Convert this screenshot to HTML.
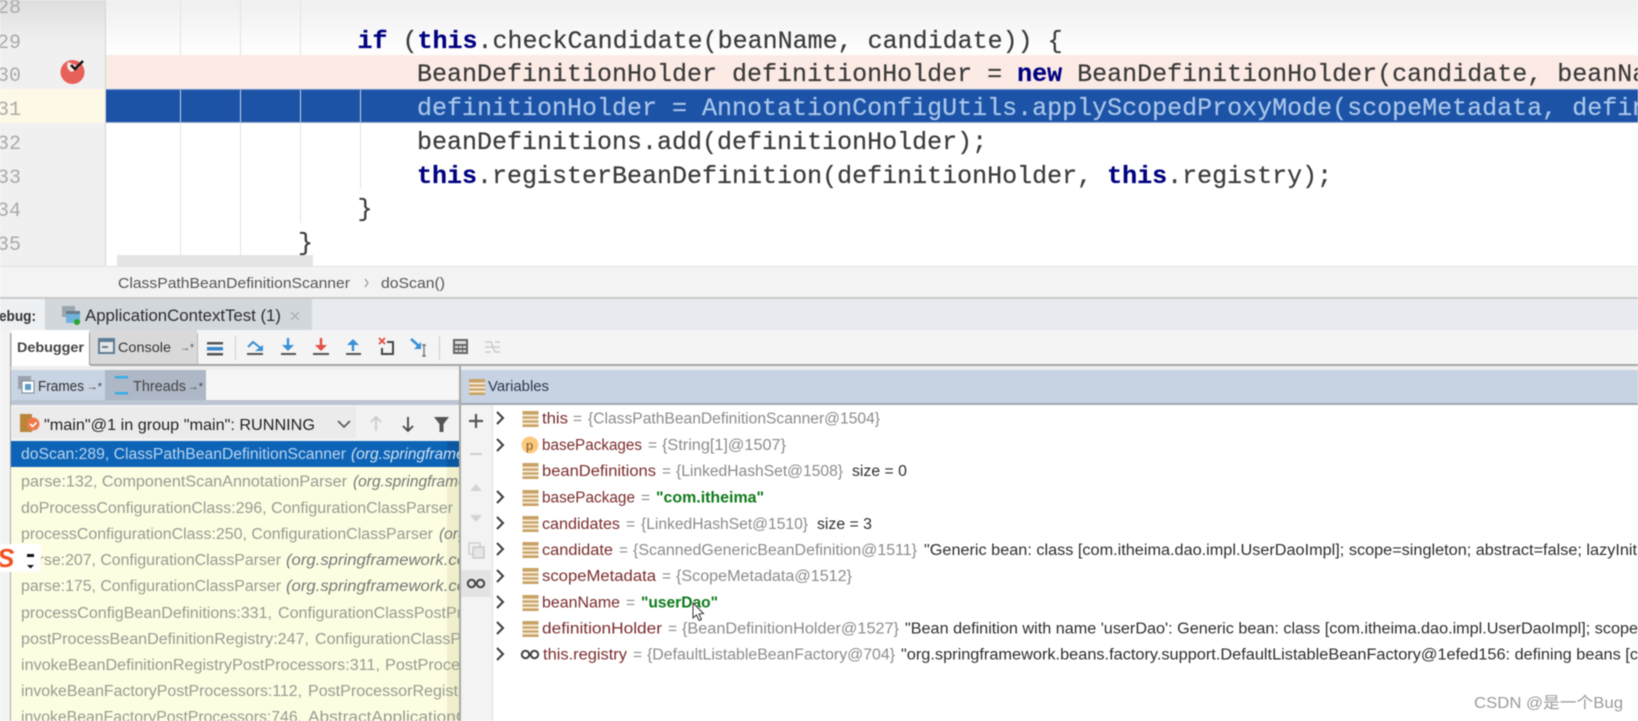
<!DOCTYPE html>
<html><head><meta charset="utf-8"><style>
html,body{margin:0;padding:0;background:#fff;width:1638px;height:721px;overflow:hidden}
svg{display:block;filter:blur(.45px)}
.c{font:25px "Liberation Mono",monospace;fill:#3a3a3a;stroke:#3a3a3a;stroke-width:.2px}
.k{font-weight:bold;fill:#000080;stroke:#000080;stroke-width:.2px}
.n{font:20px "Liberation Mono",monospace;fill:#aaa}
.u{font:15px "Liberation Sans",sans-serif;fill:#333}
.f{font:15.5px "Liberation Sans",sans-serif;fill:#9a9a92}
.i{font-style:italic;fill:#777}
.v{font:15.5px "Liberation Sans",sans-serif;fill:#7b2c2c}
.g{font:15.5px "Liberation Sans",sans-serif;fill:#8b8b8b}
.d{font:15.5px "Liberation Sans",sans-serif;fill:#2e2e2e}
.s{font:bold 15.5px "Liberation Sans",sans-serif;fill:#0f7a1a}
</style></head><body>
<svg width="1638" height="721" viewBox="0 0 1638 721" xmlns="http://www.w3.org/2000/svg">
<defs>
<linearGradient id="t" x1="0" y1="0" x2="0" y2="1"><stop offset="0" stop-color="#efefef"/><stop offset="1" stop-color="#fff"/></linearGradient>
<linearGradient id="tg" x1="0" y1="0" x2="0" y2="1"><stop offset="0" stop-color="#dedede"/><stop offset="1" stop-color="#f1f1f1"/></linearGradient>
<clipPath id="fc"><rect x="11" y="441" width="448" height="280"/></clipPath>
<clipPath id="vc"><rect x="492" y="405" width="1146" height="316"/></clipPath>
<g id="b"><rect x="0" y="0" width="16" height="16" fill="#c9a266"/><rect x="0" y="3.5" width="16" height="2" fill="#f3e6d0"/><rect x="0" y="7.5" width="16" height="2" fill="#f3e6d0"/><rect x="0" y="11.5" width="16" height="2" fill="#f3e6d0"/></g>
<path id="ch" d="M0 0l6 6-6 6" fill="none" stroke="#3c3c3c" stroke-width="2"/>
<g id="oo" fill="none" stroke="#444" stroke-width="2"><circle cx="4.5" cy="4.5" r="3.7"/><circle cx="13.5" cy="4.5" r="3.7"/></g>
</defs>

<!-- editor -->
<rect x="0" y="0" width="105" height="267" fill="#f0f0f0"/>
<rect x="0" y="0" width="105" height="45" fill="url(#tg)"/>
<rect x="105" y="0" width="1533" height="55" fill="url(#t)"/>
<rect x="105" y="55" width="1533" height="34" fill="#fcebe5"/>
<rect x="0" y="89" width="105" height="34" fill="#fef9e6"/>
<rect x="105" y="89" width="1533" height="33" fill="#1c53a7"/>
<rect x="105" y="89" width="1533" height="1" fill="#6e94cc"/>
<rect x="105" y="122" width="1533" height="1" fill="#9fb0cc"/>
<rect x="105" y="0" width="1" height="267" fill="#d4d4d4"/>
<g fill="#e3e3e3"><rect x="180" y="0" width="1" height="55"/><rect x="240" y="0" width="1" height="55"/><rect x="300" y="0" width="1" height="55"/>
<rect x="180" y="123" width="1" height="144"/><rect x="240" y="123" width="1" height="134"/><rect x="300" y="123" width="1" height="100"/><rect x="360" y="123" width="1" height="66"/></g>
<g fill="#c7d3e6"><rect x="180" y="90" width="1" height="32"/><rect x="240" y="90" width="1" height="32"/><rect x="300" y="90" width="1" height="32"/><rect x="360" y="90" width="1" height="32"/></g>
<rect x="117" y="255" width="196" height="12" fill="#e5e5e5"/>
<text class="n" x="-3" y="13">28</text><text class="n" x="-3" y="48">29</text><text class="n" x="-3" y="81">30</text><text class="n" x="-3" y="115">31</text><text class="n" x="-3" y="149">32</text><text class="n" x="-3" y="183">33</text><text class="n" x="-3" y="216">34</text><text class="n" x="-3" y="250">35</text>
<circle cx="72.5" cy="72" r="12" fill="#e8605a"/>
<path d="M68 62a7 7 0 0 0 4 10l8-5" fill="#fff" opacity=".85"/>
<path d="M71 65l4 4 8-8" fill="none" stroke="#161616" stroke-width="2.6"/>

<text class="c" x="357.5" y="48"><tspan class="k">if</tspan> (<tspan class="k">this</tspan>.checkCandidate(beanName, candidate)) {</text>
<text class="c" x="417" y="81">BeanDefinitionHolder definitionHolder = <tspan class="k">new</tspan> BeanDefinitionHolder(candidate, beanNa</text>
<text class="c" x="417" y="115" style="fill:#a9c6ea;stroke:#a9c6ea">definitionHolder = AnnotationConfigUtils.applyScopedProxyMode(scopeMetadata, defin</text>
<text class="c" x="417" y="149">beanDefinitions.add(definitionHolder);</text>
<text class="c" x="417" y="183"><tspan class="k">this</tspan>.registerBeanDefinition(definitionHolder, <tspan class="k">this</tspan>.registry);</text>
<text class="c" x="357.5" y="216">}</text>
<text class="c" x="298" y="250">}</text>

<!-- breadcrumb -->
<rect x="0" y="267" width="1638" height="30" fill="#f3f3f3"/>
<rect x="0" y="266" width="1638" height="1" fill="#e2e2e2"/>
<text class="u" x="118" y="288" textLength="232" lengthAdjust="spacingAndGlyphs" style="fill:#555">ClassPathBeanDefinitionScanner</text>
<path d="M365 279l3 4-3 4" fill="none" stroke="#999" stroke-width="1.2"/>
<text class="u" x="381" y="288" textLength="64" lengthAdjust="spacingAndGlyphs" style="fill:#555">doScan()</text>

<!-- debug tab bar -->
<rect x="0" y="297" width="1638" height="33" fill="#e7ebf0"/>
<rect x="0" y="297" width="1638" height="2" fill="#c9c9c9"/>
<rect x="0" y="299" width="45" height="31" fill="#eef1f4"/>
<rect x="45" y="299" width="267" height="31" fill="#d2d7dc"/>
<text x="-1" y="321" textLength="37" lengthAdjust="spacingAndGlyphs" style="font:bold 15px 'Liberation Sans',sans-serif;fill:#333">ebug:</text>
<rect x="62" y="306" width="13" height="11" fill="#9aa6ae"/><rect x="66" y="311" width="14" height="12" fill="#6fb2dd"/><rect x="66" y="311" width="14" height="3" fill="#6a7b88"/><circle cx="77" cy="322" r="3" fill="#2aa52a"/>
<text class="u" x="85" y="321" textLength="196" lengthAdjust="spacingAndGlyphs" style="font-size:16.5px;fill:#2c2c2c">ApplicationContextTest (1)</text>
<path d="M291 312l8 8m0-8l-8 8" stroke="#b0b0b0" stroke-width="1.4"/>

<!-- toolbar -->
<rect x="0" y="330" width="1638" height="35" fill="#f4f4f4"/>
<rect x="0" y="330" width="10" height="391" fill="#f3f3f3"/>
<rect x="11" y="330" width="78" height="35" fill="#fff"/>
<rect x="89" y="330" width="108" height="35" fill="#d9d9d9"/>
<rect x="10" y="333" width="1.5" height="388" fill="#a8a8a8"/>
<rect x="89" y="333" width="1" height="32" fill="#999"/><rect x="197" y="333" width="1" height="32" fill="#bbb"/>
<rect x="90" y="364" width="1548" height="2" fill="#a6a6a6"/>
<text x="17" y="352" textLength="67" lengthAdjust="spacingAndGlyphs" style="font:bold 14px 'Liberation Sans',sans-serif;fill:#444">Debugger</text>
<rect x="98" y="338" width="17" height="16" fill="#5e7d96"/><rect x="100" y="342" width="13" height="10" fill="#e6e6e6"/><rect x="102" y="346" width="6" height="2" fill="#5e7d96"/>
<text class="u" x="118" y="352" textLength="53" lengthAdjust="spacingAndGlyphs" style="font-size:14px">Console</text>
<text class="u" x="180" y="351" textLength="14" lengthAdjust="spacingAndGlyphs" style="font-size:11px;fill:#555">→*</text>
<g fill="#555"><rect x="207" y="342" width="16" height="2.5"/><rect x="207" y="353" width="16" height="2.5"/></g><rect x="207" y="347" width="16" height="3.5" fill="#3a86c8"/>
<rect x="235" y="336" width="1" height="24" fill="#ccc"/><rect x="439" y="336" width="1" height="24" fill="#ccc"/>
<path d="M248 347l5-5 5 4 4 3" fill="none" stroke="#3a8fd6" stroke-width="2"/><path d="M255 351h8v-6z" fill="#3a8fd6"/>
<rect x="247" y="353" width="16" height="2" fill="#555"/>
<path d="M288 338v10" stroke="#3a8fd6" stroke-width="2.4"/><path d="M282 345h12l-6 6z" fill="#3a8fd6"/><rect x="281" y="353" width="15" height="2" fill="#555"/>
<path d="M321 338v10" stroke="#e54c42" stroke-width="2.4"/><path d="M315 345h12l-6 6z" fill="#e54c42"/><rect x="313" y="353" width="16" height="2" fill="#555"/>
<path d="M353 351v-8" stroke="#3a8fd6" stroke-width="2.4"/><path d="M347 345h12l-6-6z" fill="#3a8fd6"/><rect x="346" y="353" width="15" height="2" fill="#555"/>
<path d="M379 338l6 6m0-6l-6 6" stroke="#e54c42" stroke-width="1.8"/><path d="M387 342h6v12h-11v-6" fill="none" stroke="#444" stroke-width="2"/>
<path d="M411 339l9 8" stroke="#3a8fd6" stroke-width="2.6"/><path d="M421 342v7h-7z" fill="#3a8fd6"/><path d="M422 345h4m-2 0v11m-2 0h4" fill="none" stroke="#777" stroke-width="1.4"/>
<rect x="453" y="339" width="15" height="15" fill="#666"/><rect x="455" y="341" width="11" height="3" fill="#ddd"/><g fill="#ddd"><rect x="455" y="346" width="3" height="2"/><rect x="459" y="346" width="3" height="2"/><rect x="463" y="346" width="3" height="2"/><rect x="455" y="350" width="3" height="2"/><rect x="459" y="350" width="3" height="2"/><rect x="463" y="350" width="3" height="2"/></g>
<path d="M485 342h6l4 10h5M485 352h6M495 342h5M485 347h15" fill="none" stroke="#ccc" stroke-width="1.5"/>

<!-- frames header -->
<rect x="11" y="366" width="1627" height="4" fill="#eeeeee"/>
<rect x="11" y="370" width="448" height="30" fill="#f6f6f6"/>
<rect x="11" y="370" width="94" height="30" fill="#c8d3e3"/>
<rect x="105" y="370" width="101" height="30" fill="#adb7c5"/>
<rect x="11" y="400" width="449" height="5" fill="#bcc5d2"/>
<rect x="459" y="366" width="2" height="355" fill="#a9a9a0"/>
<rect x="461" y="370" width="1177" height="33" fill="#c7d2e3"/>
<rect x="461" y="403" width="1177" height="2" fill="#9fa8b5"/>
<rect x="18" y="376" width="13" height="13" fill="#9aa3ad"/><rect x="22" y="381" width="12" height="12" fill="#fff" stroke="#7b8a96"/><rect x="25" y="384" width="6" height="6" fill="#5b9cc8"/>
<text class="u" x="38" y="391" textLength="46" lengthAdjust="spacingAndGlyphs">Frames</text>
<text class="u" x="87" y="390" textLength="15" lengthAdjust="spacingAndGlyphs" style="font-size:11px;fill:#444">→*</text>
<rect x="115" y="376" width="13" height="2.5" fill="#37aee2"/><rect x="115" y="392" width="13" height="2.5" fill="#37aee2"/>
<text class="u" x="133" y="391" textLength="53" lengthAdjust="spacingAndGlyphs" style="fill:#444">Threads</text>
<text class="u" x="188" y="390" textLength="15" lengthAdjust="spacingAndGlyphs" style="font-size:11px;fill:#444">→*</text>
<use href="#b" x="469" y="379"/>
<text class="u" x="488" y="391" textLength="61" lengthAdjust="spacingAndGlyphs" style="fill:#2c3a4c">Variables</text>

<!-- dropdown -->
<rect x="11" y="405" width="448" height="36" fill="#f2f2f2"/>
<rect x="12" y="407" width="344" height="31" fill="#ebebeb"/>
<rect x="20" y="414" width="12" height="18" fill="#b9863a"/><circle cx="33" cy="424" r="6.5" fill="#ee7a4a"/><path d="M30 424l2.5 2.5 4-4" fill="none" stroke="#fff" stroke-width="1.6"/>
<text class="u" x="44" y="430" textLength="271" lengthAdjust="spacingAndGlyphs" style="font-size:16px;fill:#222">"main"@1 in group "main": RUNNING</text>
<path d="M338 421l6 6 6-6" fill="none" stroke="#555" stroke-width="1.6"/>
<path d="M376 431v-14m-5 5l5-5 5 5" fill="none" stroke="#ccc" stroke-width="1.8"/>
<path d="M408 417v14m-5-5l5 5 5-5" fill="none" stroke="#444" stroke-width="1.8"/>
<path d="M434 417h15l-5.5 7v8h-4v-8z" fill="#555"/>

<!-- frames list -->
<rect x="11" y="441" width="448" height="280" fill="#fdfde2"/>
<rect x="447" y="467" width="12" height="254" fill="#efefcb"/>
<rect x="11" y="441" width="448" height="26" fill="#0d64b6"/>
<rect x="447" y="441" width="12" height="26" fill="#0b57a0"/>
<g clip-path="url(#fc)">
<text class="f" x="21" y="459" textLength="325" lengthAdjust="spacingAndGlyphs" style="fill:#b9d4ee">doScan:289, ClassPathBeanDefinitionScanner</text><text class="f i" x="351" y="459" style="fill:#cfe0f2">(org.springframework</text>
<text class="f" x="21" y="486.500" textLength="326" lengthAdjust="spacingAndGlyphs">parse:132, ComponentScanAnnotationParser</text><text class="f i" x="353" y="486.500">(org.springframework</text>
<text class="f" x="21" y="513" textLength="432" lengthAdjust="spacingAndGlyphs">doProcessConfigurationClass:296, ConfigurationClassParser</text>
<text class="f" x="21" y="539" textLength="412" lengthAdjust="spacingAndGlyphs">processConfigurationClass:250, ConfigurationClassParser</text><text class="f i" x="439" y="539">(org</text>
<text class="f" x="21" y="565" textLength="260" lengthAdjust="spacingAndGlyphs">parse:207, ConfigurationClassParser</text><text class="f i" x="286" y="565" textLength="180" lengthAdjust="spacingAndGlyphs">(org.springframework.co</text>
<text class="f" x="21" y="591" textLength="260" lengthAdjust="spacingAndGlyphs">parse:175, ConfigurationClassParser</text><text class="f i" x="286" y="591" textLength="180" lengthAdjust="spacingAndGlyphs">(org.springframework.co</text>
<text class="f" x="21" y="618" textLength="251" lengthAdjust="spacingAndGlyphs">processConfigBeanDefinitions:331,</text><text class="f" x="278" y="618" textLength="193" lengthAdjust="spacingAndGlyphs">ConfigurationClassPostPro</text>
<text class="f" x="21" y="644" textLength="288" lengthAdjust="spacingAndGlyphs">postProcessBeanDefinitionRegistry:247,</text><text class="f" x="315" y="644" textLength="155" lengthAdjust="spacingAndGlyphs">ConfigurationClassPo</text>
<text class="f" x="21" y="670" textLength="359" lengthAdjust="spacingAndGlyphs">invokeBeanDefinitionRegistryPostProcessors:311,</text><text class="f" x="385" y="670" textLength="75" lengthAdjust="spacingAndGlyphs">PostProce</text>
<text class="f" x="21" y="696" textLength="281" lengthAdjust="spacingAndGlyphs">invokeBeanFactoryPostProcessors:112,</text><text class="f" x="308" y="696" textLength="150" lengthAdjust="spacingAndGlyphs">PostProcessorRegist</text>
<text class="f" x="21" y="722" textLength="281" lengthAdjust="spacingAndGlyphs">invokeBeanFactoryPostProcessors:746,</text><text class="f" x="308" y="722" textLength="170" lengthAdjust="spacingAndGlyphs">AbstractApplicationCo</text>
</g>

<!-- CSDN popup -->
<rect x="0" y="544" width="41" height="28" fill="#fff"/>
<text x="-3" y="567" style="font:italic bold 26px 'Liberation Sans',sans-serif;fill:#f4501e">S</text>
<rect x="27" y="554" width="7" height="3" fill="#111"/><path d="M27 565h7l-3.500 3.500z" fill="#111"/>

<!-- variables gutter -->
<rect x="461" y="405" width="31" height="316" fill="#f3f3f3"/>
<rect x="492" y="405" width="1" height="316" fill="#dedede"/>
<path d="M476 414v14M469 421h14" stroke="#555" stroke-width="2.2"/>
<path d="M470 454h12" stroke="#cfcfcf" stroke-width="2"/>
<path d="M470 491l6-7 6 7z" fill="#d3d3d3"/><path d="M470 515l6 7 6-7z" fill="#d3d3d3"/>
<rect x="469" y="543" width="11" height="11" fill="none" stroke="#d0d0d0" stroke-width="1.500"/><rect x="473" y="547" width="11" height="11" fill="#e6e6e6" stroke="#cacaca" stroke-width="1.500"/>
<rect x="461" y="570" width="30" height="27" fill="#e3e3e3"/>
<use href="#oo" x="467" y="579"/>

<!-- variables rows -->
<use href="#ch" x="497" y="412"/><use href="#ch" x="497" y="439"/><use href="#ch" x="497" y="491"/><use href="#ch" x="497" y="517"/><use href="#ch" x="497" y="543"/><use href="#ch" x="497" y="570"/><use href="#ch" x="497" y="596"/><use href="#ch" x="497" y="622"/><use href="#ch" x="497" y="648"/>
<use href="#b" x="522.500" y="411"/>
<circle cx="530" cy="445" r="8.500" fill="#fcc97e"/><text x="526" y="450" style="font:13px 'Liberation Sans',sans-serif;fill:#7a5a2a">p</text>
<use href="#b" x="522.500" y="463"/><use href="#b" x="522.500" y="490"/><use href="#b" x="522.500" y="516"/><use href="#b" x="522.500" y="542"/><use href="#b" x="522.500" y="568"/><use href="#b" x="522.500" y="595"/><use href="#b" x="522.500" y="621"/>
<use href="#oo" x="521" y="650"/>
<g clip-path="url(#vc)">
<text class="v" x="542" y="423.500" textLength="26" lengthAdjust="spacingAndGlyphs">this</text><text class="g" x="573" y="423.500">=</text><text class="g" x="588" y="423.500" textLength="292" lengthAdjust="spacingAndGlyphs">{ClassPathBeanDefinitionScanner@1504}</text>
<text class="v" x="542" y="450" textLength="100" lengthAdjust="spacingAndGlyphs">basePackages</text><text class="g" x="648" y="450">=</text><text class="g" x="662" y="450" textLength="124" lengthAdjust="spacingAndGlyphs">{String[1]@1507}</text>
<text class="v" x="542" y="476" textLength="114" lengthAdjust="spacingAndGlyphs">beanDefinitions</text><text class="g" x="662" y="476">=</text><text class="g" x="676" y="476" textLength="167" lengthAdjust="spacingAndGlyphs">{LinkedHashSet@1508}</text><text class="d" x="852" y="476" textLength="55" lengthAdjust="spacingAndGlyphs">size = 0</text>
<text class="v" x="542" y="502.500" textLength="93" lengthAdjust="spacingAndGlyphs">basePackage</text><text class="g" x="641" y="502.500">=</text><text class="s" x="656" y="502.500" textLength="108" lengthAdjust="spacingAndGlyphs">"com.itheima"</text>
<text class="v" x="542" y="529" textLength="78" lengthAdjust="spacingAndGlyphs">candidates</text><text class="g" x="626" y="529">=</text><text class="g" x="641" y="529" textLength="167" lengthAdjust="spacingAndGlyphs">{LinkedHashSet@1510}</text><text class="d" x="817" y="529" textLength="55" lengthAdjust="spacingAndGlyphs">size = 3</text>
<text class="v" x="542" y="555" textLength="71" lengthAdjust="spacingAndGlyphs">candidate</text><text class="g" x="619" y="555">=</text><text class="g" x="633" y="555" textLength="284" lengthAdjust="spacingAndGlyphs">{ScannedGenericBeanDefinition@1511}</text><text class="d" x="924" y="555" textLength="713" lengthAdjust="spacingAndGlyphs">"Generic bean: class [com.itheima.dao.impl.UserDaoImpl]; scope=singleton; abstract=false; lazyInit</text>
<text class="v" x="542" y="581" textLength="114" lengthAdjust="spacingAndGlyphs">scopeMetadata</text><text class="g" x="662" y="581">=</text><text class="g" x="676" y="581" textLength="176" lengthAdjust="spacingAndGlyphs">{ScopeMetadata@1512}</text>
<text class="v" x="542" y="607.500" textLength="78" lengthAdjust="spacingAndGlyphs">beanName</text><text class="g" x="626" y="607.500">=</text><text class="s" x="641" y="607.500" textLength="77" lengthAdjust="spacingAndGlyphs">"userDao"</text>
<text class="v" x="542" y="633.500" textLength="120" lengthAdjust="spacingAndGlyphs">definitionHolder</text><text class="g" x="668" y="633.500">=</text><text class="g" x="682" y="633.500" textLength="217" lengthAdjust="spacingAndGlyphs">{BeanDefinitionHolder@1527}</text><text class="d" x="905" y="633.500" textLength="733" lengthAdjust="spacingAndGlyphs">"Bean definition with name 'userDao': Generic bean: class [com.itheima.dao.impl.UserDaoImpl]; scope</text>
<text class="v" x="543" y="659.500" textLength="84" lengthAdjust="spacingAndGlyphs">this.registry</text><text class="g" x="633" y="659.500">=</text><text class="g" x="647" y="659.500" textLength="248" lengthAdjust="spacingAndGlyphs">{DefaultListableBeanFactory@704}</text><text class="d" x="901" y="659.500" textLength="737" lengthAdjust="spacingAndGlyphs">"org.springframework.beans.factory.support.DefaultListableBeanFactory@1efed156: defining beans [c</text>
</g>
<!-- cursor -->
<path d="M693 603v15l3.500-3 2.500 5.500 2.500-1-2.500-5.500 4.500-.5z" fill="#fff" stroke="#333" stroke-width="1"/>
<!-- watermark -->
<text x="1474" y="708" textLength="149" lengthAdjust="spacingAndGlyphs" style="font:16px 'Liberation Sans','Noto Sans CJK SC',sans-serif;fill:#9a9a9a">CSDN @是一个Bug</text>
</svg>
</body></html>
